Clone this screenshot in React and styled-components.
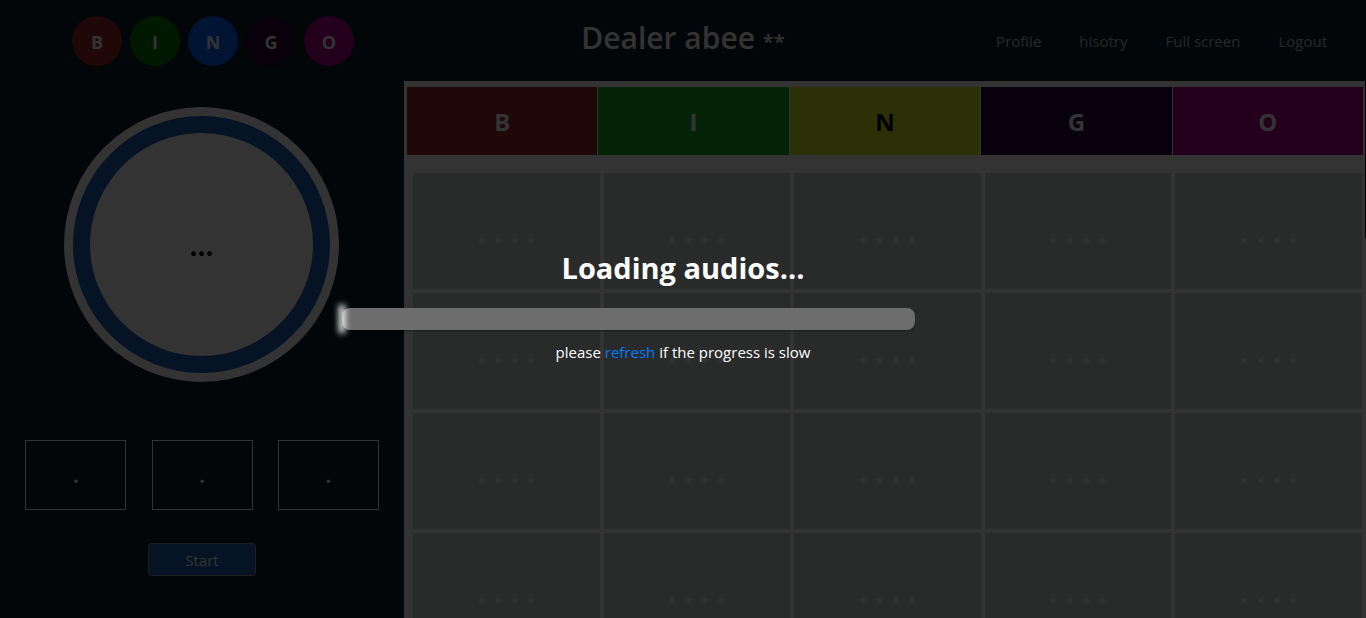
import React from "react";
import styled, { createGlobalStyle } from "styled-components";

const GlobalStyle = createGlobalStyle`
  * { box-sizing: border-box; }
  body {
    margin: 0;
    background: #0a1e28;
    color: #fff;
    font: 15px/24px "Open Sans", "Noto Sans", sans-serif;
  }
`;

const Page = styled.div`
  position: relative;
  height: 100vh;
  overflow: hidden;
  display: flex;
  flex-direction: column;
`;

const Header = styled.header`
  display: grid;
  grid-template-columns: 1fr auto 1fr;
  height: 81px;
  flex: none;
`;

const Balls = styled.div`
  display: flex;
  gap: 8px;
  padding: 16px 0 0 72px;
`;

const Ball = styled.span`
  width: 50px;
  height: 50px;
  border-radius: 50%;
  background: ${(p) => p.$color};
  font-size: 18px;
  font-weight: 700;
  line-height: 53px;
  text-align: center;
`;

const Title = styled.h1`
  margin: 0;
  font-size: 30px;
  font-weight: 600;
  line-height: 76px;
  white-space: nowrap;

  small {
    font-size: 20px;
  }
`;

const Nav = styled.nav`
  display: flex;
  justify-content: flex-end;
  gap: 38px;
  padding-right: 39px;
`;

const NavLink = styled.a`
  color: rgba(255, 255, 255, 0.75);
  line-height: 82px;
  text-decoration: none;
  white-space: nowrap;
`;

const Main = styled.main`
  flex: 1;
  min-height: 0;
  display: flex;
`;

const Side = styled.section`
  flex: none;
  width: 404px;
  display: flex;
  flex-direction: column;
  align-items: center;
  padding-top: 26px;
`;

const Dial = styled.div`
  width: 275px;
  height: 275px;
  margin-right: 1px;
  padding: 9px;
  border-radius: 50%;
  background: #fff;
`;

const DialRing = styled.div`
  height: 100%;
  border: 17px solid #195fb4;
  border-radius: 50%;
  color: #000;
  font-size: 28px;
  font-weight: 700;
  line-height: 225px;
  text-align: center;
`;

const Recent = styled.div`
  align-self: stretch;
  display: flex;
  justify-content: space-evenly;
  margin-top: 58px;
`;

const RecentBox = styled.div`
  width: 101px;
  height: 70px;
  border: 1px solid #fff;
  font-size: 20px;
  font-weight: 700;
  line-height: 70px;
  text-align: center;
`;

const StartButton = styled.button`
  width: 108px;
  height: 33px;
  margin-top: 33px;
  padding: 1px 0 0;
  border: 1px solid #969696;
  border-radius: 4px;
  background: #195fb4;
  color: #fff;
  font: inherit;
`;

const Board = styled.section`
  position: relative;
  flex: 1;
  min-width: 0;
  margin-right: 1px;
  padding: 6px 2px 0 3px;
  background: #fff;
  box-shadow: 1px 0 #fff;
`;

const ScrollThumb = styled.span`
  position: absolute;
  top: 0;
  right: -1px;
  width: 1px;
  height: 157px;
  background: #000;
`;

const Table = styled.table`
  display: block;

  thead, tbody { display: block; }
  tbody { padding: 18px 1px 0 6px; }
`;

const Row = styled.tr`
  display: grid;
  grid-template-columns: repeat(5, 1fr);
  gap: ${(p) => p.$gap}px;
  margin-bottom: ${(p) => (p.$gap > 1 ? p.$gap : 0)}px;
`;

const Head = styled.th`
  padding: 0;
  background: ${(p) => p.$color};
  color: ${(p) => (p.$dark ? "#000" : "#fff")};
  font-size: 24px;
  line-height: 70px;
  height: 68px;
`;

const Cell = styled.td`
  height: 116px;
  padding: 0;
  background: #cdd2cf;
  color: #fafafa;
  font-size: 30px;
  font-weight: 700;
  line-height: 118px;
  text-align: center;
`;

const Overlay = styled.div`
  position: absolute;
  inset: 0;
  display: flex;
  flex-direction: column;
  align-items: center;
  justify-content: center;
  padding-bottom: 6px;
  background: rgba(0, 0, 0, 0.8);
`;

const Loading = styled.div`
  width: 50%;
  text-align: center;
`;

const LoadingTitle = styled.h2`
  margin: 0;
  font-size: 29px;
  line-height: 40px;
`;

const Track = styled.div`
  width: 84%;
  height: 22px;
  margin: 20px 0 10px;
  border-radius: 8px;
  background: #6d6d6d;
  box-shadow: 0 1px 2px rgba(0, 0, 0, 0.4);
`;

const Progress = styled.div`
  width: 0;
  height: 100%;
  box-shadow: 0 0 6px 3px #fff;
`;

const Hint = styled.p`
  margin: 0;

  a {
    color: #007bff;
    text-decoration: none;
  }
`;

const balls = [
  ["B", "#a52828"],
  ["I", "#007d00"],
  ["N", "#0064ff"],
  ["G", "#280032"],
  ["O", "#af008c"],
];
const heads = [
  ["B", "#a02328"],
  ["I", "#19af28"],
  ["N", "#d7f01e"],
  ["G", "#280041"],
  ["O", "#af008c"],
];
const rows = [0, 1, 2, 3];

export default function App() {
  return (
    <Page>
      <GlobalStyle />
      <Header>
        <Balls>
          {balls.map(([letter, color]) => (
            <Ball key={letter} $color={color}>{letter}</Ball>
          ))}
        </Balls>
        <Title>Dealer abee <small>**</small></Title>
        <Nav>
          {["Profile", "hisotry", "Full screen", "Logout"].map((label) => (
            <NavLink key={label} href="#">{label}</NavLink>
          ))}
        </Nav>
      </Header>
      <Main>
        <Side>
          <Dial><DialRing>...</DialRing></Dial>
          <Recent>
            <RecentBox>.</RecentBox>
            <RecentBox>.</RecentBox>
            <RecentBox>.</RecentBox>
          </Recent>
          <StartButton type="button">Start</StartButton>
        </Side>
        <Board>
          <Table>
            <thead>
              <Row $gap={1}>
                {heads.map(([letter, color]) => (
                  <Head key={letter} $color={color} $dark={letter === "N"} scope="col">{letter}</Head>
                ))}
              </Row>
            </thead>
            <tbody>
              {rows.map((row) => (
                <Row key={row} $gap={4}>
                  {heads.map(([letter]) => <Cell key={letter}>. . . .</Cell>)}
                </Row>
              ))}
            </tbody>
          </Table>
          <ScrollThumb />
        </Board>
      </Main>
      <Overlay>
        <Loading>
          <LoadingTitle>Loading audios...</LoadingTitle>
          <Track><Progress /></Track>
          <Hint>please <a href="#">refresh</a> if the progress is slow</Hint>
        </Loading>
      </Overlay>
    </Page>
  );
}
